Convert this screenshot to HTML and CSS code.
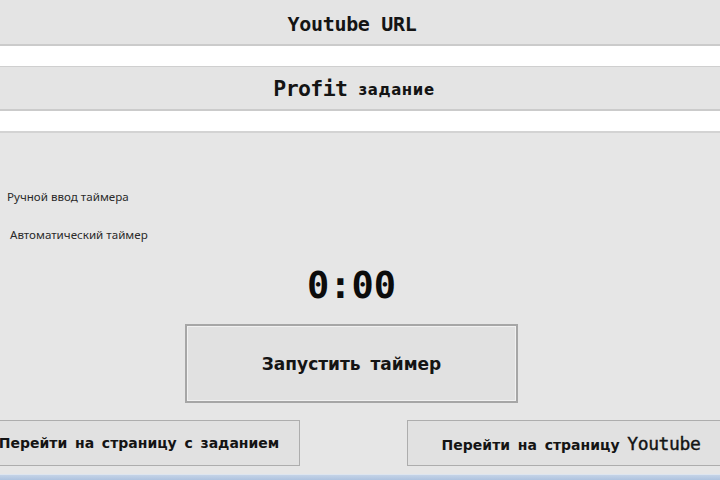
FILE: index.html
```html
<!DOCTYPE html>
<html lang="ru">
<head>
<meta charset="utf-8">
<title>Profit timer</title>
<link rel="stylesheet" href="styles.css">
</head>
<body>
<div class="app">
  <div class="bar bar-url"><span class="mono title-url">Youtube URL</span></div>
  <div class="field field-url"></div>
  <div class="bar bar-task"><span class="mono title-profit">Profit</span><span class="sub">задание</span></div>
  <div class="field field-task"></div>
  <div class="middle">
    <div class="option">Ручной ввод таймера</div>
    <div class="option option-auto">Автоматический таймер</div>
    <div class="stage">
      <div class="timer">0:00</div>
      <button class="btn btn-start">Запустить  таймер</button>
    </div>
  </div>
  <div class="nav">
    <button class="btn btn-nav btn-left">Перейти  на  страницу  с  заданием</button>
    <button class="btn btn-nav btn-right">Перейти  на  страницу  <span class="mono yt">Youtube</span></button>
  </div>
</div>
<div class="taskbar"></div>
</body>
</html>
```

FILE: styles.css
```css
html, body {
  margin: 0;
  padding: 0;
  width: 720px;
  height: 480px;
  overflow: hidden;
  background: #e6e6e6;
}

.app {
  width: 759px;
  margin-left: -24px;
  display: flex;
  flex-direction: column;
  font-family: "DejaVu Sans", sans-serif;
  color: #141414;
}

.mono {
  font-family: "DejaVu Sans Mono", monospace;
  font-weight: bold;
}

.bar {
  background: #e4e4e4;
  display: flex;
  align-items: center;
  justify-content: center;
  padding-right: 7px;
}

.bar-url {
  height: 44px;
  border-bottom: 2px solid #cbcbcb;
}

.bar-task {
  height: 42px;
  border-bottom: 2px solid #cbcbcb;
  gap: 11px;
  padding-right: 3px;
}

.title-url {
  font-size: 20px;
  letter-spacing: -0.3px;
  margin-top: 4px;
}

.title-profit {
  font-size: 21.5px;
  letter-spacing: -0.6px;
}

.sub {
  font-weight: bold;
  font-size: 15px;
  letter-spacing: 0.6px;
  margin-top: 3px;
}

.field {
  background: #ffffff;
  height: 20px;
}

.field-url {
  border-bottom: 1px solid #cfcfcf;
}

.field-task {
  border-bottom: 2px solid #d3d3d3;
}

.middle {
  display: flex;
  flex-direction: column;
  background: #e6e6e6;
}

.option {
  font-family: "Noto Sans", "Open Sans", sans-serif;
  font-size: 11.6px;
  line-height: 16px;
  color: #2a2a2a;
  padding-left: 31px;
  margin-top: 56px;
}

.option-auto {
  padding-left: 34px;
  margin-top: 22px;
}

.stage {
  width: 333px;
  margin-left: 209px;
  display: flex;
  flex-direction: column;
}

.timer {
  font-family: "DejaVu Sans Mono", monospace;
  font-weight: bold;
  font-size: 37px;
  line-height: 40px;
  text-align: center;
  margin-top: 23px;
  color: #0c0c0c;
}

.btn {
  font-family: "DejaVu Sans", sans-serif;
  font-weight: bold;
  color: #141414;
  background: #e1e1e1;
  white-space: pre;
  padding: 0;
  margin: 0;
  cursor: default;
}

.btn-start {
  margin-top: 18px;
  height: 79px;
  width: 333px;
  font-size: 17px;
  border: 2px solid #a6a6a6;
  box-shadow: inset 0 0 0 1px #f1f1f1;
  word-spacing: -1px;
}

.nav {
  display: flex;
  justify-content: space-between;
  margin-top: 17px;
}

.btn-nav {
  height: 46px;
  font-size: 14px;
  border: 1px solid #adadad;
  word-spacing: -1px;
}

.btn-left {
  width: 324px;
  padding-left: 2px;
}

.btn-right {
  width: 328px;
}

.yt {
  font-size: 18px;
  font-weight: normal;
  -webkit-text-stroke: 0.4px #141414;
  letter-spacing: -0.4px;
}

.taskbar {
  margin-top: 8px;
  height: 5px;
  border-top: 1px solid #dde5ef;
  background: linear-gradient(#c4d3e7, #aec3df);
}
```
